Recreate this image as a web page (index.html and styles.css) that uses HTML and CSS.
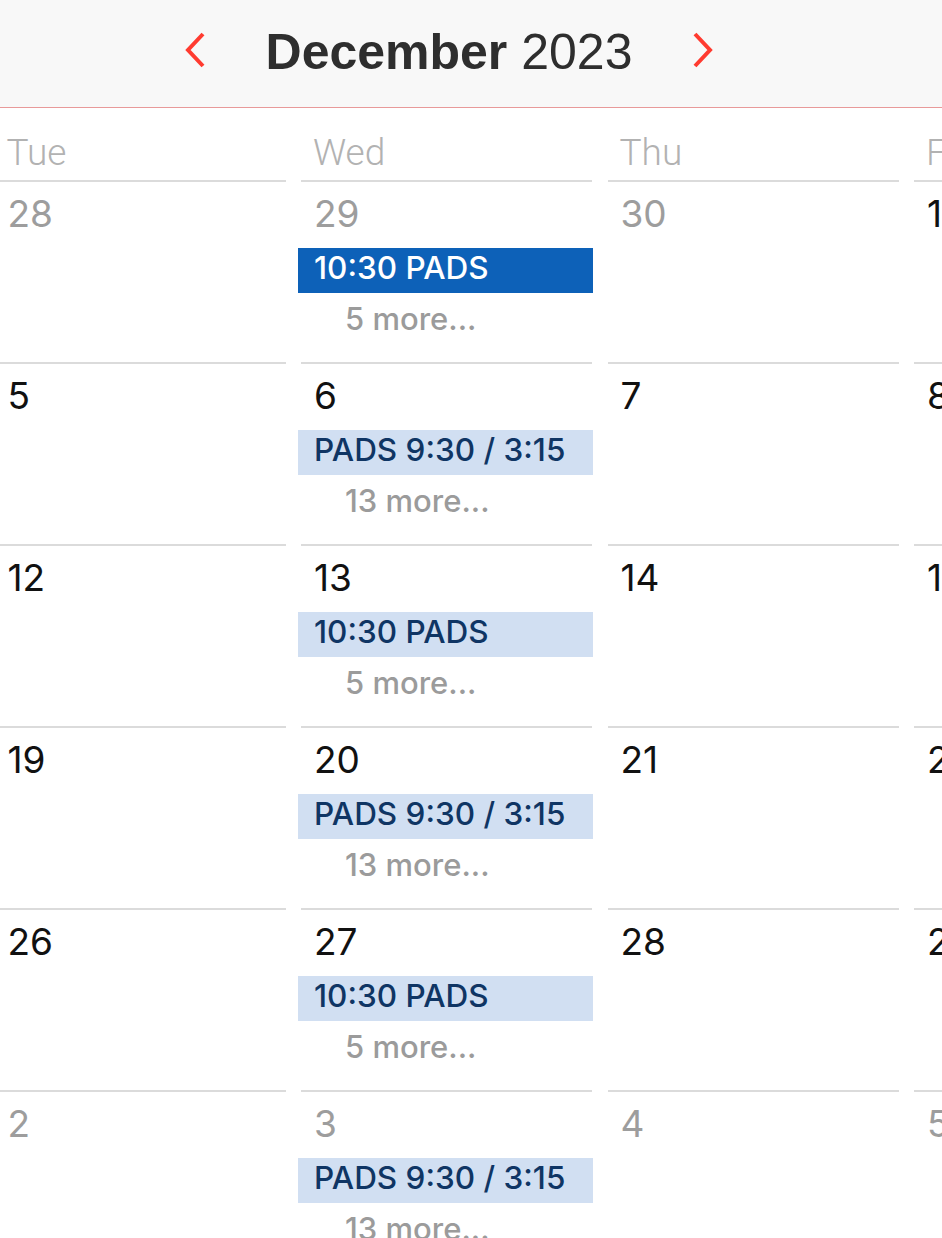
FILE: index.html
```html
<!DOCTYPE html>
<html lang="en">
<head>
<meta charset="utf-8">
<title>December 2023</title>
<link rel="stylesheet" href="styles.css">
</head>
<body>
<header class="topbar">
  <button class="nav" aria-label="Previous month">
    <svg width="22" height="36" viewBox="0 0 22 36"><polyline points="19,2 4,18 19,34" fill="none" stroke="#ff3b30" stroke-width="4"/></svg>
  </button>
  <h1 class="title"><strong>December</strong> 2023</h1>
  <button class="nav" aria-label="Next month">
    <svg width="22" height="36" viewBox="0 0 22 36"><polyline points="3,2 18,18 3,34" fill="none" stroke="#ff3b30" stroke-width="4"/></svg>
  </button>
</header>
<main class="calendar">
  <div class="row weekdays">
    <div class="wd">Tue</div><div class="wd">Wed</div><div class="wd">Thu</div><div class="wd">Fri</div>
  </div>
  <div class="row week">
    <div class="day other"><span class="num">28</span></div>
    <div class="day other"><span class="num">29</span><div class="event selected">10:30 PADS</div><div class="more">5 more...</div></div>
    <div class="day other"><span class="num">30</span></div>
    <div class="day"><span class="num">1</span></div>
  </div>
  <div class="row week">
    <div class="day"><span class="num">5</span></div>
    <div class="day"><span class="num">6</span><div class="event">PADS 9:30 / 3:15</div><div class="more">13 more...</div></div>
    <div class="day"><span class="num">7</span></div>
    <div class="day"><span class="num">8</span></div>
  </div>
  <div class="row week">
    <div class="day"><span class="num">12</span></div>
    <div class="day"><span class="num">13</span><div class="event">10:30 PADS</div><div class="more">5 more...</div></div>
    <div class="day"><span class="num">14</span></div>
    <div class="day"><span class="num">15</span></div>
  </div>
  <div class="row week">
    <div class="day"><span class="num">19</span></div>
    <div class="day"><span class="num">20</span><div class="event">PADS 9:30 / 3:15</div><div class="more">13 more...</div></div>
    <div class="day"><span class="num">21</span></div>
    <div class="day"><span class="num">22</span></div>
  </div>
  <div class="row week">
    <div class="day"><span class="num">26</span></div>
    <div class="day"><span class="num">27</span><div class="event">10:30 PADS</div><div class="more">5 more...</div></div>
    <div class="day"><span class="num">28</span></div>
    <div class="day"><span class="num">29</span></div>
  </div>
  <div class="row week">
    <div class="day other"><span class="num">2</span></div>
    <div class="day other"><span class="num">3</span><div class="event">PADS 9:30 / 3:15</div><div class="more">13 more...</div></div>
    <div class="day other"><span class="num">4</span></div>
    <div class="day other"><span class="num">5</span></div>
  </div>
</main>
</body>
</html>
```

FILE: styles.css
```css
html, body {
  margin: 0;
  padding: 0;
  background: #ffffff;
  overflow: hidden;
  font-family: "Inter", "Liberation Sans", sans-serif;
}

.topbar {
  box-sizing: border-box;
  height: 108px;
  background: #f8f8f8;
  border-bottom: 1px solid #e89a9a;
  display: flex;
  align-items: center;
  justify-content: center;
  gap: 60px;
  padding-right: 44px;
}

.nav {
  background: none;
  border: 0;
  padding: 0;
  margin: 0 0 7px 0;
  display: flex;
  width: 22px;
  height: 36px;
}

.title {
  margin: 0 0 3px 0;
  font-family: "Liberation Sans", "Inter", sans-serif;
  font-size: 50px;
  line-height: 50px;
  font-weight: 400;
  color: #2e2e2e;
  white-space: nowrap;
}

.title strong {
  font-weight: 700;
}

.calendar {
  margin-left: -5.5px;
}

.row {
  display: grid;
  grid-template-columns: repeat(4, 291px);
  column-gap: 15.5px;
}

.weekdays {
  box-sizing: border-box;
  height: 72px;
  padding-top: 26px;
}

.wd {
  padding-left: 12px;
  font-family: "Roboto", "Liberation Sans", sans-serif;
  font-weight: 300;
  font-size: 37px;
  line-height: 37px;
  color: #b2b2b2;
}

.week {
  height: 182px;
}

.day {
  border-top: 2px solid #dbdbdb;
  padding-top: 13px;
  display: flex;
  flex-direction: column;
  align-items: flex-start;
}

.num {
  padding-left: 13px;
  font-size: 37px;
  line-height: 37px;
  color: #111111;
}

.day.other .num {
  color: #9d9d9d;
}

.event {
  box-sizing: border-box;
  align-self: stretch;
  margin: 16px -1px 0 -3px;
  height: 45px;
  padding: 0 0 5px 16px;
  line-height: 40px;
  font-size: 31.5px;
  font-weight: 500;
  background: #d1dff2;
  color: #0f3564;
  white-space: nowrap;
}

.event.selected {
  background: #0d61b8;
  color: #ffffff;
}

.more {
  margin-top: 6px;
  padding-left: 44px;
  line-height: 40px;
  font-size: 31px;
  font-weight: 500;
  color: #9b9b9b;
  white-space: nowrap;
}
```
